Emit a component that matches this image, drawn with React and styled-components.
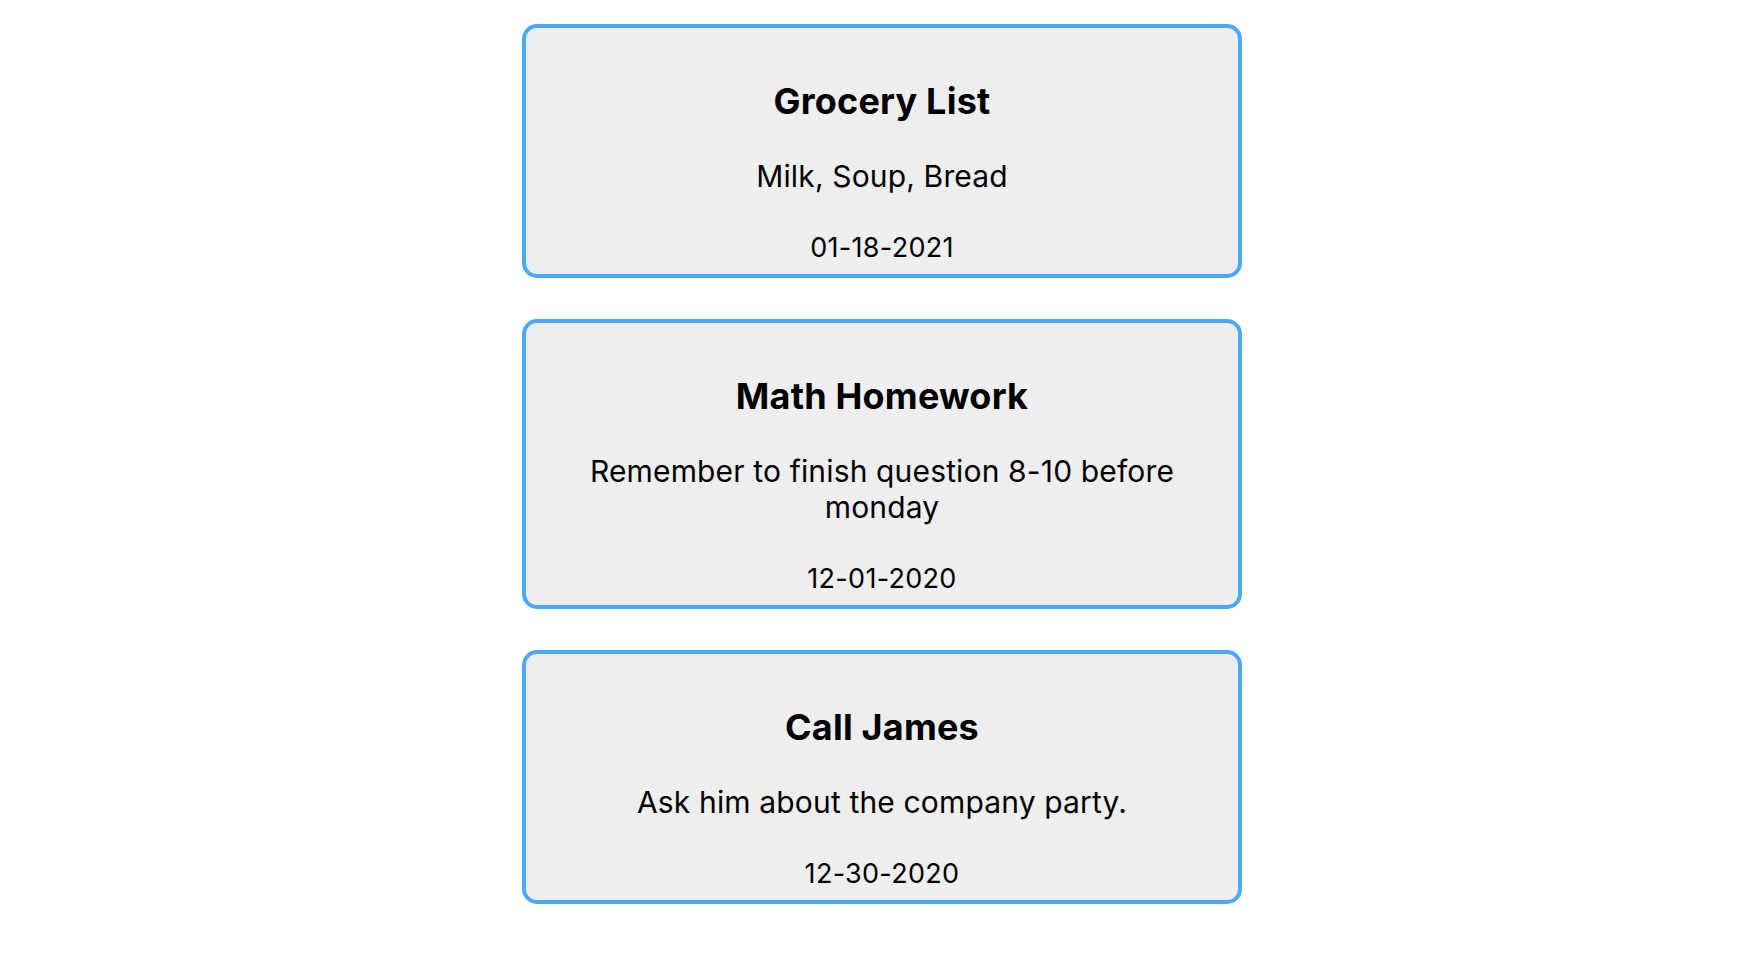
import React from "react";
import styled, { createGlobalStyle } from "styled-components";

const GlobalStyle = createGlobalStyle`
  html, body {
    margin: 0;
    padding: 0;
    background: #ffffff;
  }
  body {
    font-family: Inter, "Noto Sans", "Liberation Sans", sans-serif;
    color: #000000;
  }
`;

const Page = styled.main`
  display: flex;
  flex-direction: column;
  align-items: center;
  gap: 41px;
  padding: 24px 0 40px 4px;
`;

const Card = styled.article`
  box-sizing: border-box;
  width: 720px;
  display: flex;
  flex-direction: column;
  align-items: center;
  text-align: center;
  padding: 51px 40px 10px;
  background: #eeeeee;
  border: 4px solid #4ca8fa;
  border-radius: 15px;
`;

const Title = styled.h2`
  margin: 0;
  font-size: 36px;
  line-height: 44px;
  font-weight: 700;
  letter-spacing: 0.2px;
`;

const Body = styled.p`
  margin: 35px 0 0;
  font-size: 30px;
  line-height: 36px;
  font-weight: 400;
  letter-spacing: 0.15px;
`;

const DateText = styled.p`
  margin: 38px 0 0;
  font-size: 27px;
  line-height: 32px;
  font-weight: 400;
  letter-spacing: 0.3px;
`;

const notes = [
  { title: "Grocery List", body: "Milk, Soup, Bread", date: "01-18-2021" },
  {
    title: "Math Homework",
    body: "Remember to finish question 8-10 before monday",
    date: "12-01-2020",
  },
  { title: "Call James", body: "Ask him about the company party.", date: "12-30-2020" },
];

export default function App() {
  return (
    <>
      <GlobalStyle />
      <Page>
        {notes.map((n) => (
          <Card key={n.title}>
            <Title>{n.title}</Title>
            <Body>{n.body}</Body>
            <DateText>{n.date}</DateText>
          </Card>
        ))}
      </Page>
    </>
  );
}
